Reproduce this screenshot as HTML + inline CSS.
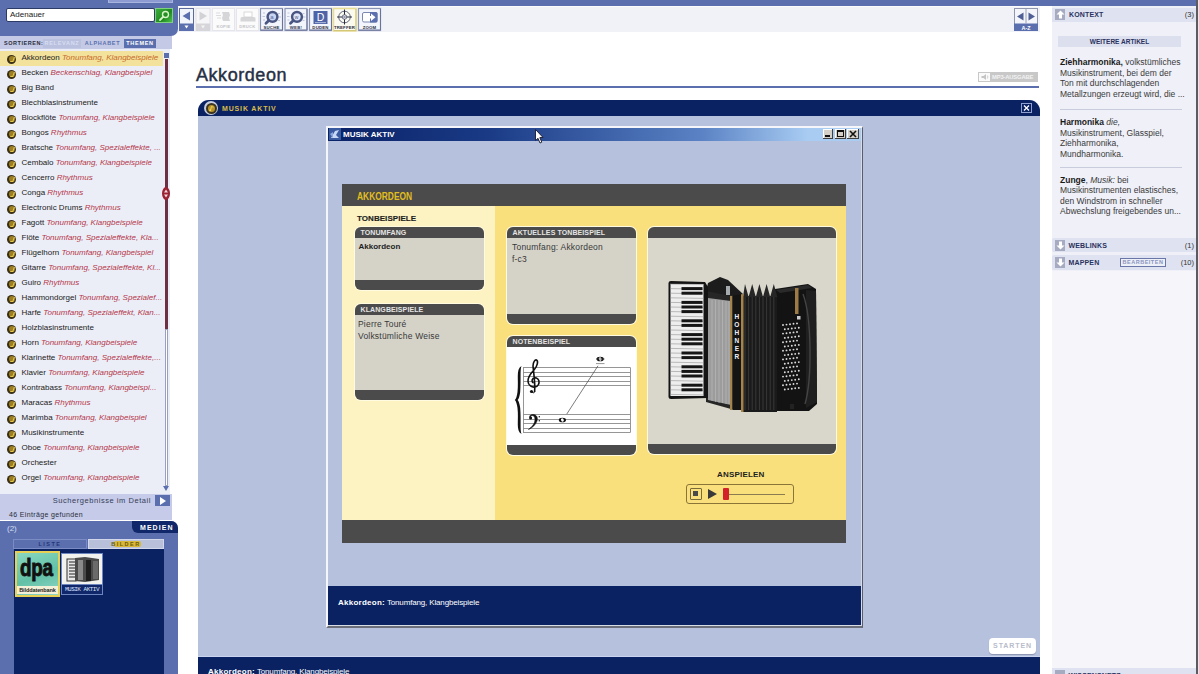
<!DOCTYPE html>
<html><head><meta charset="utf-8">
<style>
*{margin:0;padding:0;box-sizing:border-box}
html,body{width:1199px;height:674px;overflow:hidden;background:#fff;font-family:"Liberation Sans",sans-serif;position:relative}
.a{position:absolute}
#topbar{left:0;top:0;width:1196px;height:6px;background:#5b6fae}
#rborder{left:1196px;top:0;width:3px;height:674px;background:#fafafc}
/* left panel */
#lp{left:0;top:0;width:178px;height:36px;background:#5b6fae;border-bottom-right-radius:7px}
#search{left:6px;top:8px;width:149px;height:14px;background:#fff;border:1px solid #2c3a66;border-radius:2px;font-size:8px;line-height:12px;padding-left:3px;color:#222}
#sbtn{left:155px;top:8px;width:18px;height:15px;background:linear-gradient(135deg,#3cae3c,#1f8a1f 60%,#4cc04c);border:1px solid #7fd07f}
#sortbar{left:0;top:36px;width:172px;height:13px;background:#c4cae6}
.st{position:absolute;top:2.7px;height:9px;font-size:5.5px;font-weight:bold;letter-spacing:0.7px;line-height:9px;text-align:center;white-space:nowrap;overflow:hidden}
#list{left:0;top:49px;width:170px;height:445px;background:#eceef7}
.it{position:absolute;left:0;width:163px;height:15px;font-size:8px;line-height:15px;white-space:nowrap;color:#222}
.it i{color:#b4364a;letter-spacing:0px}
.ic{position:absolute;left:7px;top:3.5px;width:9px;height:9px;border-radius:50%;background:#3a3016}
.ic:after{content:"";position:absolute;left:1.5px;top:1.5px;width:6px;height:6px;border-radius:50%;background:#9c7e24}
.ic:before{content:"";position:absolute;left:3.5px;top:2.5px;width:2px;height:4px;border-right:1px solid #e8c84a;border-bottom:1px solid #e8c84a;z-index:1;transform:skewX(-20deg)}
.tx{position:absolute;left:21.5px;top:-1.5px}
#hl{background:#f3e29c}
#hl i{color:#c86a2a}
#detail{left:0;top:494px;width:172px;height:26px;background:#c5cbe8}
#medien{left:0;top:521px;width:178px;height:153px;background:#5b6fae;border-top-right-radius:7px}
/* toolbar */
.tb{position:absolute;top:8px;width:23px;height:23px;background:#f4f5fb;border:1px solid #b8bdd0}
/* main */
#title{left:196px;top:65.3px;font-size:18px;color:#263044;letter-spacing:0.55px;-webkit-text-stroke:0.45px #263044}
#uline{left:196px;top:86px;width:843px;height:2px;background:#5b6fae}
#mp3{left:978px;top:72px;width:60px;height:10px;background:#c8c8c8}
#ma{left:198px;top:100px;width:842px;height:574px;background:#b6c2dd;border-top-left-radius:11px;border-top-right-radius:11px;overflow:hidden}
#mahead{left:0;top:0;width:842px;height:16px;background:#0a2262}
.bx{position:absolute;background:#d5d3c8;border-radius:6px;box-shadow:0 0 0 1px #fffbe0;overflow:hidden}
.bh{position:absolute;left:0;top:0;width:100%;height:11px;background:#4b4b4b;color:#e4e4e4;font-size:7px;font-weight:bold;line-height:12px;padding-left:5.5px;letter-spacing:0.1px;white-space:nowrap}
.bf{position:absolute;left:0;bottom:0;width:100%;height:10px;background:#4b4b4b}
.bt{font-size:8.5px;color:#383838;line-height:11.5px;letter-spacing:0.2px;white-space:nowrap}
.ui{width:10.5px;height:11px;background:#a6abc2}
.ui svg{display:block}
.rh{font-size:7px;font-weight:bold;color:#2a3260;letter-spacing:0.15px;line-height:8px;margin-top:1.5px}
.rc{width:34px;text-align:right;font-size:7.5px;color:#333;line-height:8px;margin-top:1.5px}
.rt{font-size:8.5px;color:#3a3a3a;line-height:10.6px;white-space:nowrap}
.rt b{color:#1a1a1a}
#rp{left:1052px;top:6px;width:144px;height:668px;background:#eff0f8}
</style></head><body>
<div class="a" id="topbar"></div>
<div class="a" id="lp"></div>
<div class="a" id="search">Adenauer</div>
<div class="a" id="sbtn"><svg style="display:block" width="16" height="13"><circle cx="9.5" cy="5.5" r="3" fill="none" stroke="#d8f4c8" stroke-width="1.4"/><path d="M7.3 7.7 L4 11" stroke="#d8f4c8" stroke-width="1.8" stroke-linecap="round"/></svg></div>
<div class="a" id="sortbar"><span class="st" style="left:4px;width:40px;color:#2a2e40;text-align:left;letter-spacing:0.55px">SORTIEREN:</span><span class="st" style="left:43px;width:38px;background:#b9c1df;color:#d8ddf0">RELEVANZ</span><span class="st" style="left:83px;width:39px;color:#5b6fae">ALPHABET</span><span class="st" style="left:124px;width:32px;background:#5b6fae;color:#fff">THEMEN</span></div>
<div class="a" id="list"></div>
<div class="it" id="hl" style="top:51px"><span class="ic"></span><span class="tx">Akkordeon <i>Tonumfang, Klangbeispiele</i></span></div>
<div class="it" style="top:66px"><span class="ic"></span><span class="tx">Becken <i>Beckenschlag, Klangbeispiel</i></span></div>
<div class="it" style="top:81px"><span class="ic"></span><span class="tx">Big Band</span></div>
<div class="it" style="top:96px"><span class="ic"></span><span class="tx">Blechblasinstrumente</span></div>
<div class="it" style="top:111px"><span class="ic"></span><span class="tx">Blockflöte <i>Tonumfang, Klangbeispiele</i></span></div>
<div class="it" style="top:126px"><span class="ic"></span><span class="tx">Bongos <i>Rhythmus</i></span></div>
<div class="it" style="top:141px"><span class="ic"></span><span class="tx">Bratsche <i>Tonumfang, Spezialeffekte, ...</i></span></div>
<div class="it" style="top:156px"><span class="ic"></span><span class="tx">Cembalo <i>Tonumfang, Klangbeispiele</i></span></div>
<div class="it" style="top:171px"><span class="ic"></span><span class="tx">Cencerro <i>Rhythmus</i></span></div>
<div class="it" style="top:186px"><span class="ic"></span><span class="tx">Conga <i>Rhythmus</i></span></div>
<div class="it" style="top:201px"><span class="ic"></span><span class="tx">Electronic Drums <i>Rhythmus</i></span></div>
<div class="it" style="top:216px"><span class="ic"></span><span class="tx">Fagott <i>Tonumfang, Klangbeispiele</i></span></div>
<div class="it" style="top:231px"><span class="ic"></span><span class="tx">Flöte <i>Tonumfang, Spezialeffekte, Kla...</i></span></div>
<div class="it" style="top:246px"><span class="ic"></span><span class="tx">Flügelhorn <i>Tonumfang, Klangbeispiel</i></span></div>
<div class="it" style="top:261px"><span class="ic"></span><span class="tx">Gitarre <i>Tonumfang, Spezialeffekte, Kl...</i></span></div>
<div class="it" style="top:276px"><span class="ic"></span><span class="tx">Guiro <i>Rhythmus</i></span></div>
<div class="it" style="top:291px"><span class="ic"></span><span class="tx">Hammondorgel <i>Tonumfang, Spezialef...</i></span></div>
<div class="it" style="top:306px"><span class="ic"></span><span class="tx">Harfe <i>Tonumfang, Spezialeffekt, Klan...</i></span></div>
<div class="it" style="top:321px"><span class="ic"></span><span class="tx">Holzblasinstrumente</span></div>
<div class="it" style="top:336px"><span class="ic"></span><span class="tx">Horn <i>Tonumfang, Klangbeispiele</i></span></div>
<div class="it" style="top:351px"><span class="ic"></span><span class="tx">Klarinette <i>Tonumfang, Spezialeffekte,...</i></span></div>
<div class="it" style="top:366px"><span class="ic"></span><span class="tx">Klavier <i>Tonumfang, Klangbeispiele</i></span></div>
<div class="it" style="top:381px"><span class="ic"></span><span class="tx">Kontrabass <i>Tonumfang, Klangbeispi...</i></span></div>
<div class="it" style="top:396px"><span class="ic"></span><span class="tx">Maracas <i>Rhythmus</i></span></div>
<div class="it" style="top:411px"><span class="ic"></span><span class="tx">Marimba <i>Tonumfang, Klangbeispiel</i></span></div>
<div class="it" style="top:426px"><span class="ic"></span><span class="tx">Musikinstrumente</span></div>
<div class="it" style="top:441px"><span class="ic"></span><span class="tx">Oboe <i>Tonumfang, Klangbeispiele</i></span></div>
<div class="it" style="top:456px"><span class="ic"></span><span class="tx">Orchester</span></div>
<div class="it" style="top:471px"><span class="ic"></span><span class="tx">Orgel <i>Tonumfang, Klangbeispiele</i></span></div>
<div class="a" id="sbtop" style="left:164px;top:53px;width:5px;height:5px;background:#5b6fae"></div>
<div class="a" style="left:165px;top:59px;width:3px;height:270px;background:#6c3042"></div>
<div class="a" style="left:165px;top:329px;width:3px;height:157px;border:1px solid #9aa0bc;background:#fff"></div>
<div class="a" style="left:162px;top:187px;width:8px;height:13px;border-radius:50%;background:#9a2232"></div>
<svg class="a" style="left:162px;top:187px" width="8" height="13"><path d="M4 2.5 L6 5.5 H2Z M4 10.5 L6 7.5 H2Z" fill="#f4d8dc"/></svg>
<svg class="a" style="left:162px;top:485px" width="8" height="7"><path d="M1 1 H7 L4 6Z" fill="#5b6fae"/></svg>
<div class="a" id="detail"><span class="a" style="right:21px;top:2px;font-size:7.5px;letter-spacing:0.55px;color:#363c58;line-height:10px">Suchergebnisse im Detail</span><span class="a" style="left:155px;top:1px;width:15px;height:11px;background:#5b6fae"></span><svg class="a" style="left:159px;top:3px" width="8" height="8"><path d="M1 0 L7 4 L1 8Z" fill="#fff"/></svg><span class="a" style="left:9px;top:16px;font-size:7px;letter-spacing:0.35px;color:#2a2e40;line-height:10px">46 Einträge gefunden</span></div>
<div class="a" id="medien"></div>
<div class="a" style="left:7px;top:524px;font-size:8px;color:#d4dcf2;line-height:10px">(2)</div>
<div class="a" style="left:132px;top:521px;width:46px;height:12px;background:#10276a;border-bottom-left-radius:6px;border-top-right-radius:7px"></div>
<div class="a" style="left:140px;top:522px;font-size:7px;font-weight:bold;color:#fff;letter-spacing:1.05px;line-height:11px">MEDIEN</div>
<div class="a" style="left:13px;top:539px;width:74px;height:10px;background:#5b6fae;border:1px solid #7b8bc4"></div>
<div class="a" style="left:13px;top:539px;width:74px;text-align:center;font-size:5.5px;font-weight:bold;color:#24347a;letter-spacing:1.5px;line-height:10px">LISTE</div>
<div class="a" style="left:88px;top:539px;width:76px;height:10px;background:#b9c0d9;border:1px solid #d2d7ea"></div>
<div class="a" style="left:114px;top:541px;width:27px;height:6px;background:#d8b838;border-radius:2px"></div>
<div class="a" style="left:88px;top:539px;width:76px;text-align:center;font-size:5.5px;font-weight:bold;color:#6a5a10;letter-spacing:1.5px;line-height:10px">BILDER</div>
<div class="a" style="left:14px;top:549px;width:150px;height:125px;background:#0a2262"></div>
<div class="a" style="left:15px;top:551px;width:45px;height:46px;background:#e8d054;padding:2px">
 <div style="position:relative;width:41px;height:42px;background:linear-gradient(160deg,#88d8c0,#62c0a6 55%,#90d8c8)">
  <div style="position:absolute;left:3px;top:0.5px;font-size:23px;font-weight:bold;color:#111;letter-spacing:-0.3px;line-height:28px;-webkit-text-stroke:0.9px #111;transform:scaleX(0.82);transform-origin:0 0">dpa</div>
  <div style="position:absolute;left:0;top:33px;width:41px;height:8px;background:#f4f0d8;font-size:5.5px;font-weight:bold;color:#222;text-align:center;line-height:8px;letter-spacing:-0.1px">Bilddatenbank</div>
 </div>
</div>
<div class="a" style="left:61px;top:553px;width:42px;height:42px;background:#f2f2ee;border:1px solid #6e86c0">
 <svg style="position:absolute;left:3px;top:2px" width="36" height="27" viewBox="0 0 36 27">
  <rect x="2" y="3" width="9" height="22" fill="#e8e8e8" stroke="#333" stroke-width="1"/>
  <g stroke="#222" stroke-width="1"><line x1="4" y1="6" x2="10" y2="6"/><line x1="4" y1="9" x2="10" y2="9"/><line x1="4" y1="12" x2="10" y2="12"/><line x1="4" y1="15" x2="10" y2="15"/><line x1="4" y1="18" x2="10" y2="18"/><line x1="4" y1="21" x2="10" y2="21"/></g>
  <path d="M10 2 L20 1 L34 3 L34 24 L20 26 L10 25Z" fill="#4a4a4a"/>
  <rect x="13" y="4" width="5" height="20" fill="#8a8a8a"/>
  <rect x="21" y="4" width="5" height="21" fill="#1e1e1e"/>
  <rect x="28" y="5" width="5" height="18" fill="#6a6a6a"/>
 </svg>
 <div style="position:absolute;left:0;top:30px;width:40px;height:10px;background:#10276a;border-top:1px solid #6e86c0;font-size:6px;color:#dfe6ff;text-align:center;line-height:9px;font-family:'Liberation Mono',monospace;letter-spacing:-0.5px">MUSIK AKTIV</div>
</div>
<div class="a" style="left:178px;top:6px;width:862px;height:25.5px;background:#f1f2f8;border-top:1.5px solid #fbfbfe"></div>
<svg class="a" style="left:176px;top:6px" width="212" height="28" viewBox="176 6 212 28">
 <!-- back -->
 <rect x="179.5" y="8.5" width="14" height="22" fill="#f2f4fb" stroke="#5b6a9a" stroke-width="1"/>
 <rect x="179" y="23.5" width="15" height="7.5" fill="#5b6fae"/>
 <path d="M182.5 16 L190 11.5 L190 20.5Z" fill="#5b6fae"/>
 <path d="M184.5 25.5 H188.5 L186.5 28.5Z" fill="#fff"/>
 <!-- forward disabled -->
 <rect x="196" y="8.5" width="14" height="22" fill="#f6f6f8" stroke="#e2e2e6" stroke-width="1"/>
 <rect x="196" y="23.5" width="14" height="7.5" fill="#d6d6da"/>
 <path d="M207 16 L199.5 11.5 L199.5 20.5Z" fill="#d2d2d6"/>
 <path d="M201 25.5 H205 L203 28.5Z" fill="#f4f4f4"/>
 <!-- kopie -->
 <rect x="212.5" y="8.5" width="22" height="22" fill="#fbfbfc" stroke="#e6e6ea" stroke-width="1"/>
 <path d="M222 12 h7 l1 3 l-1 3 l1 3 h-7 l-1 -3 l1 -3z" fill="#d6d6d8"/>
 <path d="M216 13 h4 M216 15.5 h5 M217 18 h4" stroke="#d4d4d6" stroke-width="0.8"/>
 <text x="223.5" y="28.3" font-size="4.1" font-weight="bold" fill="#c2c2c6" text-anchor="middle" font-family="Liberation Sans" letter-spacing="0.3">KOPIE</text>
 <!-- druck -->
 <rect x="236.5" y="8.5" width="22" height="22" fill="#fbfbfc" stroke="#e6e6ea" stroke-width="1"/>
 <path d="M242 17 h12 a1.5 1.5 0 0 1 1.5 1.5 v3 h-15 v-3 a1.5 1.5 0 0 1 1.5 -1.5z" fill="#d6d6d8"/>
 <rect x="244" y="12" width="8" height="5" fill="#fff" stroke="#d0d0d2" stroke-width="0.8"/>
 <text x="247.5" y="28.3" font-size="4.1" font-weight="bold" fill="#c2c2c6" text-anchor="middle" font-family="Liberation Sans" letter-spacing="0.3">DRUCK</text>
 <!-- suche -->
 <rect x="260.5" y="8.5" width="22" height="22" fill="#f3f5fc" stroke="#8a93b4" stroke-width="1.2"/>
 <path d="M261 30 H282.5 V9" fill="none" stroke="#6a7498" stroke-width="1"/>
 <path d="M263 13 h2 M262.5 16.5 h2.5 M263 20 h2 M278 13.5 h2 M278.5 17 h2.5 M278 20.5 h2" stroke="#aab2cc" stroke-width="0.7"/>
 <circle cx="272.5" cy="16.8" r="4.9" fill="#c8d4f0" stroke="#4a5582" stroke-width="2.5"/>
 <path d="M268.8 20.5 L266 23.2" stroke="#4a5582" stroke-width="2.8" stroke-linecap="round"/>
 <text x="272" y="19" font-size="6" fill="#5b6aa0" text-anchor="middle" font-family="Liberation Sans">a</text>
 <text x="271.5" y="28.6" font-size="4.3" font-weight="bold" fill="#2a2e3e" text-anchor="middle" font-family="Liberation Sans" letter-spacing="0.2">SUCHE</text>
 <!-- web -->
 <rect x="285" y="8.5" width="22" height="22" fill="#f3f5fc" stroke="#8a93b4" stroke-width="1.2"/>
 <path d="M285.5 30 H307 V9" fill="none" stroke="#6a7498" stroke-width="1"/>
 <path d="M287.5 13 h2 M287 16.5 h2.5 M287.5 20 h2 M302.5 13.5 h2 M303 17 h2.5 M302.5 20.5 h2" stroke="#aab2cc" stroke-width="0.7"/>
 <circle cx="297" cy="16.8" r="4.9" fill="#dfe6f8" stroke="#4a5582" stroke-width="2.5"/>
 <path d="M293.3 20.5 L290.5 23.2" stroke="#4a5582" stroke-width="2.8" stroke-linecap="round"/>
 <text x="296.5" y="19.2" font-size="5" fill="#4a5582" text-anchor="middle" font-family="Liberation Sans">w</text>
 <text x="296" y="28.6" font-size="4.3" font-weight="bold" fill="#3a3e50" text-anchor="middle" font-family="Liberation Sans" letter-spacing="0.2">WEB!</text>
 <!-- duden -->
 <rect x="309.5" y="8.5" width="22" height="22" fill="#f3f5fc" stroke="#8a93b4" stroke-width="1.2"/>
 <path d="M310 30 H331.5 V9" fill="none" stroke="#6a7498" stroke-width="1"/>
 <rect x="313.5" y="11" width="14" height="13" fill="#4f64a6"/>
 <text x="320.5" y="20.8" font-size="10.5" fill="#fff" text-anchor="middle" font-family="Liberation Sans">D</text>
 <rect x="315" y="22.3" width="11" height="0.8" fill="#c8d0ea"/>
 <text x="320.5" y="28.6" font-size="4.3" font-weight="bold" fill="#2a2e3e" text-anchor="middle" font-family="Liberation Sans" letter-spacing="0.2">DUDEN</text>
 <!-- treffer -->
 <rect x="333.5" y="8.5" width="22.5" height="22.5" fill="#fbfaf0" stroke="#e8dc90" stroke-width="1.5"/>
 <path d="M334 30.5 H356 V9" fill="none" stroke="#d4c878" stroke-width="1"/>
 <circle cx="344.5" cy="17" r="5.8" fill="none" stroke="#505670" stroke-width="0.9"/>
 <circle cx="344.5" cy="17" r="2.3" fill="#e4e6ee" stroke="#505670" stroke-width="0.8"/>
 <path d="M337 17 H342.2 M346.8 17 H352 M344.5 9.5 V14.7 M344.5 19.3 V24.5" stroke="#2a2e40" stroke-width="1"/>
 <path d="M343.3 15.8 L345.7 18.2 M345.7 15.8 L343.3 18.2" stroke="#505670" stroke-width="0.6"/>
 <text x="344.5" y="28.6" font-size="4.3" font-weight="bold" fill="#2a2e3e" text-anchor="middle" font-family="Liberation Sans" letter-spacing="0.15">TREFFER</text>
 <!-- zoom -->
 <rect x="358.5" y="8.5" width="22" height="22" fill="#f3f5fc" stroke="#8a93b4" stroke-width="1.2"/>
 <path d="M359 30 H380.5 V9" fill="none" stroke="#6a7498" stroke-width="1"/>
 <rect x="362.5" y="12.5" width="14.5" height="9.5" rx="1.5" fill="#fff" stroke="#7d88b0" stroke-width="1"/>
 <path d="M370 12 h6 a1.5 1.5 0 0 1 1.5 1.5 v7.5 a1.5 1.5 0 0 1 -1.5 1.5 h-6z" fill="#5b6fae"/>
 <path d="M366 16 h5 v-2.5 l4.5 3.8 l-4.5 3.8 v-2.5 h-5z" fill="#fff"/>
 <text x="369.5" y="28.6" font-size="4.3" font-weight="bold" fill="#2a2e3e" text-anchor="middle" font-family="Liberation Sans" letter-spacing="0.2">ZOOM</text>
</svg>
<svg class="a" style="left:1012px;top:6px" width="30" height="28" viewBox="1012 6 30 28">
 <rect x="1014.5" y="8.5" width="23" height="22" fill="#f4f5fb" stroke="#8f96ae" stroke-width="1"/>
 <rect x="1014" y="23.5" width="24" height="7.5" fill="#5b6fae"/>
 <line x1="1026" y1="9" x2="1026" y2="23.5" stroke="#9aa0b8" stroke-width="1"/>
 <path d="M1017 16.5 L1023.5 12.5 L1023.5 20.5Z" fill="#4f5e94"/>
 <path d="M1035 16.5 L1028.5 12.5 L1028.5 20.5Z" fill="#4f5e94"/>
 <text x="1026" y="29.6" font-size="5.5" font-weight="bold" fill="#fff" text-anchor="middle" font-family="Liberation Sans">A-Z</text>
</svg>
<div class="a" id="title">Akkordeon</div>
<div class="a" id="uline"></div>
<div class="a" id="mp3"><div style="position:absolute;left:1px;top:1px;width:11px;height:8px;background:#fafafa"></div><svg style="position:absolute;left:2px;top:1px" width="10" height="8"><path d="M1.5 3 H3.5 L6 1 V7 L3.5 5 H1.5Z" fill="#c4c4c4"/><path d="M7.3 2.5 Q8.5 4 7.3 5.5" stroke="#c4c4c4" stroke-width="0.8" fill="none"/></svg><div style="position:absolute;left:14px;top:0;font-size:5.8px;font-weight:bold;color:#f2f2f2;line-height:10px;letter-spacing:-0.15px">MP3-AUSGABE</div></div>
<div class="a" id="ma">
 <div class="a" id="mahead"></div>
 <div class="a" style="left:6px;top:1px;width:14px;height:14px;border-radius:50%;background:#c8cde0;padding:1.5px"><div style="width:11px;height:11px;border-radius:50%;background:#3a3420;position:relative"><div style="position:absolute;left:2px;top:2px;width:7px;height:7px;border-radius:50%;background:#b8922a"></div><svg style="position:absolute;left:2px;top:2px" width="7" height="7"><path d="M2.5 5.5 L3.5 1.5 L5.5 2.2" stroke="#f0d860" stroke-width="0.9" fill="none"/><circle cx="2.2" cy="5.3" r="1" fill="#f0d860"/></svg></div></div>
 <div class="a" style="left:24px;top:3.5px;font-size:7px;font-weight:bold;color:#d8bc4a;letter-spacing:0.85px;line-height:10px">MUSIK AKTIV</div>
 <div class="a" style="left:823px;top:3px;width:11px;height:10px;border:1px solid #8fa0d0"></div>
 <svg class="a" style="left:823px;top:3px" width="11" height="10"><path d="M3 2.5 L8 7.5 M8 2.5 L3 7.5" stroke="#fff" stroke-width="1.3"/></svg>
 <div class="a" style="left:791px;top:538px;width:47px;height:16px;background:#fff;border-radius:4px;box-shadow:0 1px 1px #8a94b0;font-size:7px;font-weight:bold;color:#b8bccb;text-align:center;line-height:16px;letter-spacing:0.9px">STARTEN</div>
 <div class="a" style="left:0;top:556px;width:842px;height:1px;background:#c9d4ee"></div>
 <div class="a" style="left:0;top:557px;width:842px;height:17px;background:#0a2262"></div>
 <div class="a" style="left:10px;top:566.5px;font-size:8px;color:#fff;line-height:10px;letter-spacing:-0.15px"><b style="letter-spacing:0.25px">Akkordeon:</b> Tonumfang, Klangbeispiele</div>
</div>

<div class="a" id="win" style="left:326px;top:126px;width:537px;height:502px;background:#b6c2dd;border-top:2px solid #f4f6fa;border-left:2px solid #f4f6fa;border-right:1px solid #5a5e6a;border-bottom:2px solid #6a6e78;box-shadow:inset -1px -1px 0 #d8dce6">
 <div class="a" style="left:0;top:0;width:533px;height:12.6px;background:linear-gradient(90deg,#0a2266 0%,#1a3a86 30%,#5a82c4 70%,#a8ccf2 90%,#a8ccf2 100%)"></div>
 <svg class="a" style="left:1px;top:0" width="12" height="12"><rect x="0" y="0" width="12" height="12" fill="#3a5aa0"/><path d="M2 10 L6 3 L10 2 L7 7 L10 10Z" fill="#c8d8f4"/><path d="M1 6 L4 4 L4 10Z" fill="#8aa6dc"/></svg>
 <div class="a" style="left:15px;top:1.8px;font-size:8px;font-weight:bold;color:#fff;line-height:10px">MUSIK AKTIV</div>
 <div class="a" style="left:495px;top:1px;width:10px;height:10px;background:#d4d0c8;border-right:1px solid #404040;border-bottom:1px solid #404040;box-shadow:inset 1px 1px 0 #fff"><div style="position:absolute;left:2px;top:6px;width:5px;height:2px;background:#111"></div></div>
 <div class="a" style="left:507px;top:1px;width:11px;height:10px;background:#d4d0c8;border-right:1px solid #404040;border-bottom:1px solid #404040;box-shadow:inset 1px 1px 0 #fff"><div style="position:absolute;left:2px;top:1px;width:7px;height:7px;border:1px solid #111;border-top-width:2px"></div></div>
 <div class="a" style="left:519px;top:1px;width:12px;height:10px;background:#d4d0c8;border-right:1px solid #404040;border-bottom:1px solid #404040;box-shadow:inset 1px 1px 0 #fff"><svg style="position:absolute;left:2px;top:1px" width="8" height="8"><path d="M1 1 L7 7 M7 1 L1 7" stroke="#111" stroke-width="1.6"/></svg></div>
 <div class="a" style="left:0;top:458px;width:533px;height:39px;background:#0a2262"></div>
 <div class="a" style="left:10px;top:470px;font-size:8px;color:#fff;line-height:10px;letter-spacing:-0.15px"><b style="letter-spacing:0.25px">Akkordeon:</b> Tonumfang, Klangbeispiele</div>
</div>
<div class="a" id="cp" style="left:342px;top:184px;width:504px;height:359px;background:#fae07c">
 <div class="a" style="left:0;top:0;width:504px;height:22px;background:#4b4b4b"></div>
 <div class="a" style="left:15px;top:6.5px;font-size:10.4px;font-weight:bold;color:#e2be1e;line-height:11px;transform:scaleX(0.81);transform-origin:0 0">AKKORDEON</div>
 <div class="a" style="left:0;top:22px;width:153px;height:314px;background:#fdf3c2"></div>
 <div class="a" style="left:0;top:336px;width:504px;height:23px;background:#4b4b4b"></div>
 <div class="a" style="left:15px;top:29.5px;font-size:8px;font-weight:bold;color:#1e1e1e;line-height:10px;letter-spacing:0.05px;-webkit-text-stroke:0.15px #1e1e1e">TONBEISPIELE</div>

 <div class="bx" style="left:13px;top:43px;width:129px;height:63px"><div class="bh">TONUMFANG</div><div class="bf"></div></div>
 <div class="a bt" style="left:16.5px;top:57px;font-weight:bold;letter-spacing:0;font-size:8px;color:#1e1e1e">Akkordeon</div>
 <div class="bx" style="left:13px;top:120px;width:129px;height:96px"><div class="bh">KLANGBEISPIELE</div><div class="bf"></div></div>
 <div class="a bt" style="left:16px;top:135px">Pierre Touré<br>Volkstümliche Weise</div>
 <div class="bx" style="left:165px;top:43px;width:129px;height:97px"><div class="bh">AKTUELLES TONBEISPIEL</div><div class="bf"></div></div>
 <div class="a bt" style="left:170px;top:58px">Tonumfang: Akkordeon<br>f-c3</div>
 <div class="bx" style="left:165px;top:152px;width:129px;height:119px;background:#fff"><div class="bh">NOTENBEISPIEL</div><div class="bf"></div></div>
 <div class="bx" style="left:306px;top:43px;width:188px;height:227px;background:#d9d7cc"><div class="bh"></div><div class="bf"></div></div>
 <div class="a" style="left:375px;top:286px;font-size:8px;font-weight:bold;color:#1e1e1e;line-height:10px;letter-spacing:0.2px">ANSPIELEN</div>
</div>
<svg class="a" style="left:506px;top:345px" width="130" height="100" viewBox="506 345 130 100">
 <g stroke="#8a8a8a" stroke-width="0.9">
  <line x1="523" y1="367.5" x2="630.3" y2="367.5"/><line x1="523" y1="372.5" x2="630.3" y2="372.5"/><line x1="523" y1="376.5" x2="630.3" y2="376.5"/><line x1="523" y1="381.5" x2="630.3" y2="381.5"/><line x1="523" y1="385.5" x2="630.3" y2="385.5"/>
  <line x1="523" y1="414.5" x2="630.3" y2="414.5"/><line x1="523" y1="419.5" x2="630.3" y2="419.5"/><line x1="523" y1="423.5" x2="630.3" y2="423.5"/><line x1="523" y1="428.5" x2="630.3" y2="428.5"/><line x1="523" y1="432.5" x2="630.3" y2="432.5"/>
  <line x1="523.5" y1="367.5" x2="523.5" y2="432.5"/><line x1="630.5" y1="367.5" x2="630.5" y2="432.5"/>
  <line x1="596" y1="363.6" x2="604.5" y2="363.6"/>
 </g>
 <path d="M521.5 366 C515.5 369 519 380 517.5 392 C517 396 516 399 514.8 400 C516 401 517 404 517.5 408 C519 420 515.5 431 521.5 434 C519.8 430 521.2 420 520.2 408 C519.7 404 518.7 401 517.6 400 C518.7 399 519.7 396 520.2 392 C521.2 380 519.8 370 521.5 366Z" fill="#111"/>
 <path d="M534.6 392 C535.5 384 533.5 372 533 366 C533 362 535 359.5 536.5 360 C538.5 361 537.5 366 534 370 C530 374 527.8 377 528 381.5 C528.3 385.5 532 387.5 535 387 C538.5 386.5 539.5 383 538.8 380.5 C538 378 535 377 533 378.5 C531.5 380 532 382.5 533.5 383" fill="none" stroke="#111" stroke-width="1.6"/>
 <circle cx="531.5" cy="391.5" r="1.6" fill="#111"/>
 <path d="M531.5 391.5 C533 393.5 535 393 534.6 391" fill="none" stroke="#111" stroke-width="1"/>
 <path d="M529.5 417.5 C529.5 415 531.5 414.3 533.5 414.5 C537 415 538 418 537 421 C535.5 425 532 428 528.5 429.5 C531.5 427 535 424 535 419.5 C535 416.5 533.5 415.3 532 415.5 C530.8 415.7 530.5 416.5 530.8 417.3" fill="#111" stroke="#111" stroke-width="0.6"/>
 <circle cx="530.6" cy="418" r="1.5" fill="#111"/>
 <circle cx="539.3" cy="416.8" r="0.7" fill="#111"/><circle cx="539.3" cy="420.8" r="0.7" fill="#111"/>
 <ellipse cx="600.2" cy="359" rx="3.6" ry="2.3" fill="#111"/><ellipse cx="600.2" cy="359" rx="1.3" ry="1.7" fill="#fff" transform="rotate(-30 600.2 359)"/>
 <line x1="596" y1="359" x2="604.5" y2="359" stroke="#333" stroke-width="0.7"/>
 <ellipse cx="562.4" cy="420" rx="3.6" ry="2.3" fill="#111"/><ellipse cx="562.4" cy="420" rx="1.3" ry="1.7" fill="#fff" transform="rotate(-30 562.4 420)"/>
 <line x1="566.8" y1="414" x2="598" y2="365.8" stroke="#444" stroke-width="0.7"/>
</svg>
<svg class="a" style="left:648px;top:238px" width="188" height="206" viewBox="648 238 188 206">
 <!-- right bass body -->
 <path d="M775 289 L808 284 L816 289 L817 404 L809 411 L776 411Z" fill="#131313"/>
 <path d="M806 290 L816 291 L817 402 L806 408Z" fill="#1f1f1f"/>
 <path d="M803 294 C812 318 812 380 805 404" fill="none" stroke="#444" stroke-width="1.4"/>
 <path d="M776 290 L808 285 L812 288 L780 293Z" fill="#2a2a2a"/>
 <rect x="795" y="288" width="3.5" height="26" fill="#9c7c44"/>
 <rect x="797" y="316" width="3.5" height="3.5" fill="#ccc"/>
 <circle cx="783.0" cy="325.0" r="0.95" fill="#dcdcdc"/><circle cx="786.5" cy="324.6" r="0.95" fill="#dcdcdc"/><circle cx="790.0" cy="324.2" r="0.95" fill="#dcdcdc"/><circle cx="793.5" cy="323.8" r="0.95" fill="#dcdcdc"/><circle cx="797.0" cy="323.4" r="0.95" fill="#dcdcdc"/><circle cx="784.8" cy="329.3" r="0.95" fill="#dcdcdc"/><circle cx="788.2" cy="328.9" r="0.95" fill="#dcdcdc"/><circle cx="791.8" cy="328.5" r="0.95" fill="#dcdcdc"/><circle cx="795.2" cy="328.1" r="0.95" fill="#dcdcdc"/><circle cx="798.8" cy="327.7" r="0.95" fill="#dcdcdc"/><circle cx="783.0" cy="333.6" r="0.95" fill="#dcdcdc"/><circle cx="786.5" cy="333.2" r="0.95" fill="#dcdcdc"/><circle cx="790.0" cy="332.8" r="0.95" fill="#dcdcdc"/><circle cx="793.5" cy="332.4" r="0.95" fill="#dcdcdc"/><circle cx="797.0" cy="332.0" r="0.95" fill="#dcdcdc"/><circle cx="784.8" cy="337.9" r="0.95" fill="#dcdcdc"/><circle cx="788.2" cy="337.5" r="0.95" fill="#dcdcdc"/><circle cx="791.8" cy="337.1" r="0.95" fill="#dcdcdc"/><circle cx="795.2" cy="336.7" r="0.95" fill="#dcdcdc"/><circle cx="798.8" cy="336.3" r="0.95" fill="#dcdcdc"/><circle cx="783.0" cy="342.2" r="0.95" fill="#dcdcdc"/><circle cx="786.5" cy="341.8" r="0.95" fill="#dcdcdc"/><circle cx="790.0" cy="341.4" r="0.95" fill="#dcdcdc"/><circle cx="793.5" cy="341.0" r="0.95" fill="#dcdcdc"/><circle cx="797.0" cy="340.6" r="0.95" fill="#dcdcdc"/><circle cx="784.8" cy="346.5" r="0.95" fill="#dcdcdc"/><circle cx="788.2" cy="346.1" r="0.95" fill="#dcdcdc"/><circle cx="791.8" cy="345.7" r="0.95" fill="#dcdcdc"/><circle cx="795.2" cy="345.3" r="0.95" fill="#dcdcdc"/><circle cx="798.8" cy="344.9" r="0.95" fill="#dcdcdc"/><circle cx="783.0" cy="350.8" r="0.95" fill="#dcdcdc"/><circle cx="786.5" cy="350.4" r="0.95" fill="#dcdcdc"/><circle cx="790.0" cy="350.0" r="0.95" fill="#dcdcdc"/><circle cx="793.5" cy="349.6" r="0.95" fill="#dcdcdc"/><circle cx="797.0" cy="349.2" r="0.95" fill="#dcdcdc"/><circle cx="784.8" cy="355.1" r="0.95" fill="#dcdcdc"/><circle cx="788.2" cy="354.7" r="0.95" fill="#dcdcdc"/><circle cx="791.8" cy="354.3" r="0.95" fill="#dcdcdc"/><circle cx="795.2" cy="353.9" r="0.95" fill="#dcdcdc"/><circle cx="798.8" cy="353.5" r="0.95" fill="#dcdcdc"/><circle cx="783.0" cy="359.4" r="0.95" fill="#dcdcdc"/><circle cx="786.5" cy="359.0" r="0.95" fill="#dcdcdc"/><circle cx="790.0" cy="358.6" r="0.95" fill="#dcdcdc"/><circle cx="793.5" cy="358.2" r="0.95" fill="#dcdcdc"/><circle cx="797.0" cy="357.8" r="0.95" fill="#dcdcdc"/><circle cx="784.8" cy="363.7" r="0.95" fill="#dcdcdc"/><circle cx="788.2" cy="363.3" r="0.95" fill="#dcdcdc"/><circle cx="791.8" cy="362.9" r="0.95" fill="#dcdcdc"/><circle cx="795.2" cy="362.5" r="0.95" fill="#dcdcdc"/><circle cx="798.8" cy="362.1" r="0.95" fill="#dcdcdc"/><circle cx="783.0" cy="368.0" r="0.95" fill="#dcdcdc"/><circle cx="786.5" cy="367.6" r="0.95" fill="#dcdcdc"/><circle cx="790.0" cy="367.2" r="0.95" fill="#dcdcdc"/><circle cx="793.5" cy="366.8" r="0.95" fill="#dcdcdc"/><circle cx="797.0" cy="366.4" r="0.95" fill="#dcdcdc"/><circle cx="784.8" cy="372.3" r="0.95" fill="#dcdcdc"/><circle cx="788.2" cy="371.9" r="0.95" fill="#dcdcdc"/><circle cx="791.8" cy="371.5" r="0.95" fill="#dcdcdc"/><circle cx="795.2" cy="371.1" r="0.95" fill="#dcdcdc"/><circle cx="798.8" cy="370.7" r="0.95" fill="#dcdcdc"/><circle cx="783.0" cy="376.6" r="0.95" fill="#dcdcdc"/><circle cx="786.5" cy="376.2" r="0.95" fill="#dcdcdc"/><circle cx="790.0" cy="375.8" r="0.95" fill="#dcdcdc"/><circle cx="793.5" cy="375.4" r="0.95" fill="#dcdcdc"/><circle cx="797.0" cy="375.0" r="0.95" fill="#dcdcdc"/><circle cx="784.8" cy="380.9" r="0.95" fill="#dcdcdc"/><circle cx="788.2" cy="380.5" r="0.95" fill="#dcdcdc"/><circle cx="791.8" cy="380.1" r="0.95" fill="#dcdcdc"/><circle cx="795.2" cy="379.7" r="0.95" fill="#dcdcdc"/><circle cx="798.8" cy="379.3" r="0.95" fill="#dcdcdc"/><circle cx="783.0" cy="385.2" r="0.95" fill="#dcdcdc"/><circle cx="786.5" cy="384.8" r="0.95" fill="#dcdcdc"/><circle cx="790.0" cy="384.4" r="0.95" fill="#dcdcdc"/><circle cx="793.5" cy="384.0" r="0.95" fill="#dcdcdc"/><circle cx="797.0" cy="383.6" r="0.95" fill="#dcdcdc"/><circle cx="784.8" cy="389.5" r="0.95" fill="#dcdcdc"/><circle cx="788.2" cy="389.1" r="0.95" fill="#dcdcdc"/><circle cx="791.8" cy="388.7" r="0.95" fill="#dcdcdc"/><circle cx="795.2" cy="388.3" r="0.95" fill="#dcdcdc"/><circle cx="798.8" cy="387.9" r="0.95" fill="#dcdcdc"/>
 <rect x="790" y="404" width="4" height="5" fill="#222"/>
 <!-- bellows -->
 <rect x="743" y="296" width="34" height="116" fill="#1a1a1a"/>
 <line x1="745.0" y1="296" x2="745.0" y2="410" stroke="#3c3c3c" stroke-width="0.9"/><line x1="748.6" y1="296" x2="748.6" y2="410" stroke="#3c3c3c" stroke-width="0.9"/><line x1="752.2" y1="296" x2="752.2" y2="410" stroke="#3c3c3c" stroke-width="0.9"/><line x1="755.8" y1="296" x2="755.8" y2="410" stroke="#3c3c3c" stroke-width="0.9"/><line x1="759.4" y1="296" x2="759.4" y2="410" stroke="#3c3c3c" stroke-width="0.9"/><line x1="763.0" y1="296" x2="763.0" y2="410" stroke="#3c3c3c" stroke-width="0.9"/><line x1="766.6" y1="296" x2="766.6" y2="410" stroke="#3c3c3c" stroke-width="0.9"/><line x1="770.2" y1="296" x2="770.2" y2="410" stroke="#3c3c3c" stroke-width="0.9"/><line x1="773.8" y1="296" x2="773.8" y2="410" stroke="#3c3c3c" stroke-width="0.9"/>
 <path d="M743 297 L745.0 284 L748.6 297 L752.2 284 L755.8 297 L759.4 284 L763.0 297 L766.6 284 L770.2 297 L773.8 284 L777.4 297 L777 297Z" fill="#262626"/>
 <!-- treble body -->
 <path d="M706 290 L731 295 L743 294 L743 410 L731 409 L706 402Z" fill="#262626"/>
 <path d="M708 298 L731 301 L731 405 L708 400Z" fill="#9c9c9c"/>
 <g stroke="#c4c4c4" stroke-width="0.5">
  <line x1="712" y1="300" x2="712" y2="401"/><line x1="715.5" y1="300" x2="715.5" y2="402"/><line x1="719" y1="300" x2="719" y2="403"/><line x1="722.5" y1="301" x2="722.5" y2="403"/><line x1="726" y1="301" x2="726" y2="404"/><line x1="729" y1="301" x2="729" y2="404"/>
 </g>
 <rect x="730" y="294" width="2.5" height="116" fill="#a4844a"/>
 <rect x="741" y="294" width="2.5" height="118" fill="#a4844a"/>
 <rect x="732.5" y="294" width="8.5" height="116" fill="#141414"/>
 <g font-size="6.5" font-weight="bold" fill="#f0f0f0" text-anchor="middle" font-family="Liberation Sans">
 <text x="736.8" y="319">H</text><text x="736.8" y="327">O</text><text x="736.8" y="335">H</text><text x="736.8" y="343">N</text><text x="736.8" y="351">E</text><text x="736.8" y="359">R</text>
 </g>
 <path d="M708 283 L720 277 L728 280 L743 294 L731 296 L706 291Z" fill="#1c1c1c"/>
 <rect x="726" y="286" width="4" height="9" fill="#a4aaae"/>
 <!-- keyboard -->
 <path d="M668.5 283 Q668.5 281 671 281 L705 282 L708 287 L708 398 L671 399 Q668.5 399 668.5 397Z" fill="#141414"/>
 <rect x="670.5" y="284" width="33" height="112" fill="#eeeeee"/>
 <line x1="670" y1="284.00" x2="704" y2="284.60" stroke="#8a8a8a" stroke-width="0.55"/><line x1="670" y1="288.60" x2="704" y2="289.20" stroke="#8a8a8a" stroke-width="0.55"/><line x1="670" y1="293.20" x2="704" y2="293.80" stroke="#8a8a8a" stroke-width="0.55"/><line x1="670" y1="297.80" x2="704" y2="298.40" stroke="#8a8a8a" stroke-width="0.55"/><line x1="670" y1="302.40" x2="704" y2="303.00" stroke="#8a8a8a" stroke-width="0.55"/><line x1="670" y1="307.00" x2="704" y2="307.60" stroke="#8a8a8a" stroke-width="0.55"/><line x1="670" y1="311.60" x2="704" y2="312.20" stroke="#8a8a8a" stroke-width="0.55"/><line x1="670" y1="316.20" x2="704" y2="316.80" stroke="#8a8a8a" stroke-width="0.55"/><line x1="670" y1="320.80" x2="704" y2="321.40" stroke="#8a8a8a" stroke-width="0.55"/><line x1="670" y1="325.40" x2="704" y2="326.00" stroke="#8a8a8a" stroke-width="0.55"/><line x1="670" y1="330.00" x2="704" y2="330.60" stroke="#8a8a8a" stroke-width="0.55"/><line x1="670" y1="334.60" x2="704" y2="335.20" stroke="#8a8a8a" stroke-width="0.55"/><line x1="670" y1="339.20" x2="704" y2="339.80" stroke="#8a8a8a" stroke-width="0.55"/><line x1="670" y1="343.80" x2="704" y2="344.40" stroke="#8a8a8a" stroke-width="0.55"/><line x1="670" y1="348.40" x2="704" y2="349.00" stroke="#8a8a8a" stroke-width="0.55"/><line x1="670" y1="353.00" x2="704" y2="353.60" stroke="#8a8a8a" stroke-width="0.55"/><line x1="670" y1="357.60" x2="704" y2="358.20" stroke="#8a8a8a" stroke-width="0.55"/><line x1="670" y1="362.20" x2="704" y2="362.80" stroke="#8a8a8a" stroke-width="0.55"/><line x1="670" y1="366.80" x2="704" y2="367.40" stroke="#8a8a8a" stroke-width="0.55"/><line x1="670" y1="371.40" x2="704" y2="372.00" stroke="#8a8a8a" stroke-width="0.55"/><line x1="670" y1="376.00" x2="704" y2="376.60" stroke="#8a8a8a" stroke-width="0.55"/><line x1="670" y1="380.60" x2="704" y2="381.20" stroke="#8a8a8a" stroke-width="0.55"/><line x1="670" y1="385.20" x2="704" y2="385.80" stroke="#8a8a8a" stroke-width="0.55"/><line x1="670" y1="389.80" x2="704" y2="390.40" stroke="#8a8a8a" stroke-width="0.55"/><line x1="670" y1="394.40" x2="704" y2="395.00" stroke="#8a8a8a" stroke-width="0.55"/>
 <rect x="681.5" y="287.10" width="21" height="3" fill="#151515"/><rect x="681.5" y="291.70" width="21" height="3" fill="#151515"/><rect x="681.5" y="300.90" width="21" height="3" fill="#151515"/><rect x="681.5" y="305.50" width="21" height="3" fill="#151515"/><rect x="681.5" y="310.10" width="21" height="3" fill="#151515"/><rect x="681.5" y="319.30" width="21" height="3" fill="#151515"/><rect x="681.5" y="323.90" width="21" height="3" fill="#151515"/><rect x="681.5" y="333.10" width="21" height="3" fill="#151515"/><rect x="681.5" y="337.70" width="21" height="3" fill="#151515"/><rect x="681.5" y="342.30" width="21" height="3" fill="#151515"/><rect x="681.5" y="351.50" width="21" height="3" fill="#151515"/><rect x="681.5" y="356.10" width="21" height="3" fill="#151515"/><rect x="681.5" y="365.30" width="21" height="3" fill="#151515"/><rect x="681.5" y="369.90" width="21" height="3" fill="#151515"/><rect x="681.5" y="374.50" width="21" height="3" fill="#151515"/><rect x="681.5" y="383.70" width="21" height="3" fill="#151515"/><rect x="681.5" y="388.30" width="21" height="3" fill="#151515"/>
</svg>
<div class="a" style="left:685.5px;top:483.5px;width:108px;height:20px;border:1.5px solid #8a7438;border-radius:3px"></div>
<div class="a" style="left:690px;top:488px;width:12px;height:12px;border:1.5px solid #7a6a3a;border-radius:1px;background:#fae07c"><div style="position:absolute;left:2px;top:2px;width:5px;height:5px;background:#4a4a4a"></div></div>
<svg class="a" style="left:707px;top:488px" width="12" height="12"><path d="M1 1 L10 6 L1 11Z" fill="#3a3a3a"/></svg>
<div class="a" style="left:729px;top:493.5px;width:56px;height:1.5px;background:#8a7c50"></div>
<div class="a" style="left:723px;top:487.5px;width:6px;height:12px;background:#d4202a;border-radius:1px"></div>
<div class="a" id="rp"></div>
<div class="a" style="left:1196px;top:0;width:2px;height:674px;background:#5c5c60"></div>
<div class="a" style="left:1198px;top:0;width:1px;height:674px;background:#e8e8ec"></div>
<div class="a" style="left:1052px;top:6px;width:144px;height:16px;background:#dfe2f0;border-top:2px solid #eef0f8"></div>
<div class="a ui" style="left:1054.5px;top:9px"><svg width="11" height="11"><path d="M5.5 1.5 L9.5 5.5 H7 V9.5 H4 V5.5 H1.5Z" fill="#fff"/></svg></div>
<div class="a rh" style="left:1069px;top:9px">KONTEXT</div>
<div class="a rc" style="left:1160px;top:9px">(3)</div>
<div class="a" style="left:1058px;top:36px;width:123px;height:11px;background:#dcdfee;font-size:6.5px;font-weight:bold;color:#2a3260;text-align:center;line-height:11px;letter-spacing:0px">WEITERE ARTIKEL</div>
<div class="a rt" style="left:1060px;top:57px"><b>Ziehharmonika,</b> volkstümliches<br>Musikinstrument, bei dem der<br>Ton mit durchschlagenden<br>Metallzungen erzeugt wird, die ...</div>
<div class="a" style="left:1060px;top:109px;width:122px;height:1px;background:#c8ccdc"></div>
<div class="a rt" style="left:1060px;top:117px"><b>Harmonika</b> <i>die,</i><br>Musikinstrument, Glasspiel,<br>Ziehharmonika,<br>Mundharmonika.</div>
<div class="a" style="left:1060px;top:166.5px;width:122px;height:1px;background:#c8ccdc"></div>
<div class="a rt" style="left:1060px;top:174.5px"><b>Zunge</b>, <i>Musik:</i> bei<br>Musikinstrumenten elastisches,<br>den Windstrom in schneller<br>Abwechslung freigebendes un...</div>
<div class="a" style="left:1052px;top:238px;width:144px;height:14px;background:#dfe2f0;border-radius:2px 0 0 2px"></div>
<div class="a ui" style="left:1054.5px;top:240px"><svg width="11" height="11"><path d="M5.5 9.5 L9.5 5.5 H7 V1.5 H4 V5.5 H1.5Z" fill="#fff"/></svg></div>
<div class="a rh" style="left:1068.5px;top:240px">WEBLINKS</div>
<div class="a rc" style="left:1160px;top:240px">(1)</div>
<div class="a" style="left:1052px;top:255px;width:144px;height:15px;background:#dfe2f0;border-radius:2px 0 0 2px"></div>
<div class="a ui" style="left:1054.5px;top:257px"><svg width="11" height="11"><path d="M5.5 9.5 L9.5 5.5 H7 V1.5 H4 V5.5 H1.5Z" fill="#fff"/></svg></div>
<div class="a rh" style="left:1068.5px;top:257px">MAPPEN</div>
<div class="a" style="left:1120px;top:258px;width:46px;height:9px;border:1px solid #6a76a8;background:#eef0f8;font-size:5.5px;font-weight:bold;color:#8a94c0;text-align:center;line-height:7px;letter-spacing:0.5px">BEARBEITEN</div>
<div class="a rc" style="left:1160px;top:257px">(10)</div>
<div class="a" style="left:1052px;top:271px;width:144px;height:397px;background:#f5f5fa"></div>
<div class="a" style="left:1052px;top:668px;width:144px;height:6px;background:#dfe2f0"></div>
<div class="a ui" style="left:1054.5px;top:670px"></div>
<div class="a rh" style="left:1068.5px;top:670px">WISSENSNETZ</div>

<div class="a" style="left:108px;top:0;width:65px;height:3px;background:#8e9bd2;border:1px solid #a8b4e0;border-top:none"></div>
<svg class="a" style="left:535px;top:129px" width="10" height="16" viewBox="0 0 10 16"><path d="M0.5 0.5 L0.5 11.5 L3 9.3 L5 14 L6.8 13.2 L4.8 8.6 L8 8.4Z" fill="#fff" stroke="#1a1a2a" stroke-width="0.9" stroke-linejoin="round"/></svg>
</body></html>
